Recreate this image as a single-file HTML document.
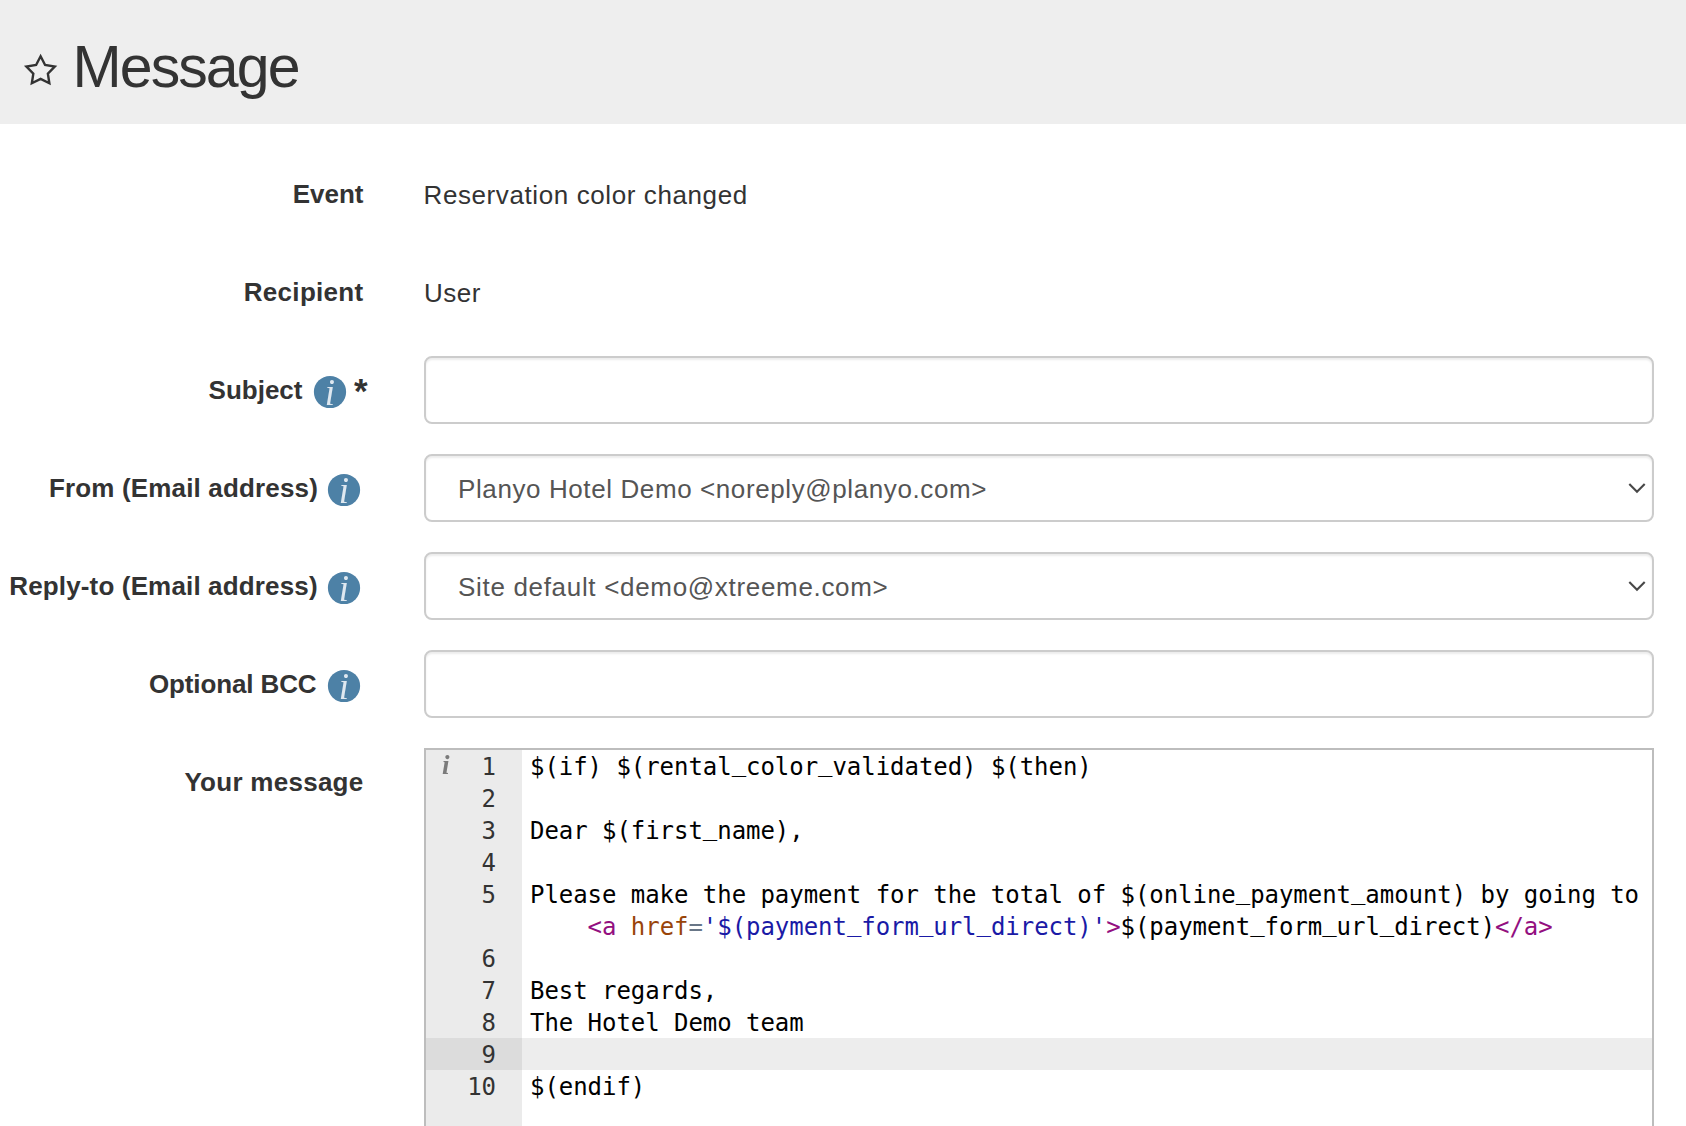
<!DOCTYPE html>
<html lang="en">
<head>
<meta charset="utf-8">
<title>Message</title>
<style>
html,body{margin:0;padding:0;background:#fff;}
body{width:1686px;height:1126px;position:relative;overflow:hidden;font-family:"Liberation Sans",sans-serif;color:#333;}
.hdr{position:absolute;left:0;top:0;width:1686px;height:124px;background:#eee;}
.hdr h1{position:absolute;left:72.5px;top:34px;margin:0;font-weight:400;font-size:59px;line-height:66px;letter-spacing:-1.9px;color:#333;white-space:nowrap;}
.star{position:absolute;left:20px;top:50px;width:42px;height:42px;}
.lbl{position:absolute;right:1322.5px;height:40px;line-height:40px;font-size:26px;font-weight:700;white-space:nowrap;color:#333;}
.val{position:absolute;left:424px;margin-top:.5px;height:40px;line-height:40px;font-size:26px;white-space:nowrap;color:#333;}
.inp{position:absolute;left:424px;width:1230px;height:68px;box-sizing:border-box;border:2px solid #ccc;border-radius:8px;background:#fff;box-shadow:inset 0 2px 2px rgba(0,0,0,.075);}
.inp span{position:absolute;left:32px;top:13px;height:40px;line-height:40px;font-size:26px;color:#555;white-space:nowrap;}
.inp svg{position:absolute;right:4.5px;top:26px;}
.info{position:absolute;width:36px;height:36px;}
.ast{position:absolute;font-size:35px;font-weight:700;line-height:40px;}
.ed{position:absolute;left:424px;top:748px;width:1230px;height:400px;box-sizing:border-box;border:2px solid #bdbdbd;background:#fff;overflow:hidden;font-family:"DejaVu Sans Mono","Liberation Mono",monospace;font-size:24px;letter-spacing:-0.047px;line-height:32px;color:#000;}
.gut{position:absolute;left:0;top:0;width:96px;height:400px;background:#ebebeb;color:#333;}
.gut div{position:absolute;left:0;width:70px;height:32px;line-height:34px;text-align:right;}
.gut .act{background:#dcdcdc;width:96px;box-sizing:border-box;padding-right:26px;}
.ln{position:absolute;left:104px;height:32px;line-height:34px;white-space:pre;}
.actl{position:absolute;left:96px;top:288px;width:1134px;height:32px;background:#ededed;}
.u{position:relative;top:-4.5px}
.t{color:#930f80}.a{color:#994409}.o{color:#687687}.s{color:#1a1aa6}
.gut .gi{position:absolute;left:16px;top:0;width:auto;text-align:left;font-family:"Liberation Serif",serif;font-style:italic;font-weight:700;font-size:27px;line-height:31px;color:#7b7b7b;letter-spacing:0;filter:blur(.5px);}
</style>
</head>
<body>
<svg width="0" height="0" style="position:absolute"><filter id="bl" x="-10%" y="-10%" width="120%" height="120%"><feGaussianBlur stdDeviation="0.45"/></filter></svg>
<div class="hdr">
<svg class="star" viewBox="0 0 42 42"><polygon points="20.60,6.30 25.10,15.01 34.77,16.60 27.88,23.56 29.36,33.25 20.60,28.85 11.84,33.25 13.32,23.56 6.43,16.60 16.10,15.01" fill="none" stroke="#333" stroke-width="2.4" stroke-linejoin="miter" id="st"/></svg>
<h1>Message</h1>
</div>

<div class="lbl" style="top:174px">Event</div>
<div class="val" style="top:174px;left:423.5px;letter-spacing:.6px">Reservation color changed</div>

<div class="lbl" style="top:272px;letter-spacing:.3px">Recipient</div>
<div class="val" style="top:272px;letter-spacing:.5px">User</div>

<div class="lbl" style="top:370px;right:1383.5px">Subject</div>
<svg class="info" style="left:312px;top:374px" width="36" height="36" viewBox="0 0 36 36"><g filter="url(#bl)"><circle cx="18" cy="18" r="16.1" fill="#4e81a6"/><text x="17.9" y="31" text-anchor="middle" font-family="Liberation Serif, serif" font-style="italic" font-size="37" fill="#eef3f8" fill-opacity=".9">i</text></g></svg>
<div class="ast" style="left:354px;top:370.5px">*</div>
<div class="inp" style="top:356px"></div>

<div class="lbl" style="top:468px;right:1368px;letter-spacing:.16px">From (Email address)</div>
<svg class="info" style="left:326px;top:472px" width="36" height="36" viewBox="0 0 36 36"><g filter="url(#bl)"><circle cx="18" cy="18" r="16.1" fill="#4e81a6"/><text x="17.9" y="31" text-anchor="middle" font-family="Liberation Serif, serif" font-style="italic" font-size="37" fill="#eef3f8" fill-opacity=".9">i</text></g></svg>
<div class="inp" style="top:454px"><span style="letter-spacing:.6px">Planyo Hotel Demo &lt;noreply@planyo.com&gt;</span><svg width="22" height="14" viewBox="0 0 22 14"><polyline points="3.3,2 11,9.7 18.7,2" fill="none" stroke="#484848" stroke-width="2.1"/></svg></div>

<div class="lbl" style="top:566px;right:1368.3px;letter-spacing:.15px">Reply-to (Email address)</div>
<svg class="info" style="left:326px;top:570px" width="36" height="36" viewBox="0 0 36 36"><g filter="url(#bl)"><circle cx="18" cy="18" r="16.1" fill="#4e81a6"/><text x="17.9" y="31" text-anchor="middle" font-family="Liberation Serif, serif" font-style="italic" font-size="37" fill="#eef3f8" fill-opacity=".9">i</text></g></svg>
<div class="inp" style="top:552px"><span style="letter-spacing:.68px">Site default &lt;demo@xtreeme.com&gt;</span><svg width="22" height="14" viewBox="0 0 22 14"><polyline points="3.3,2 11,9.7 18.7,2" fill="none" stroke="#484848" stroke-width="2.1"/></svg></div>

<div class="lbl" style="top:664px;right:1369.5px;letter-spacing:-.12px">Optional BCC</div>
<svg class="info" style="left:326px;top:668px" width="36" height="36" viewBox="0 0 36 36"><g filter="url(#bl)"><circle cx="18" cy="18" r="16.1" fill="#4e81a6"/><text x="17.9" y="31" text-anchor="middle" font-family="Liberation Serif, serif" font-style="italic" font-size="37" fill="#eef3f8" fill-opacity=".9">i</text></g></svg>
<div class="inp" style="top:650px"></div>

<div class="lbl" style="top:762px;letter-spacing:.27px">Your message</div>

<div class="ed">
<div class="gut">
<div class="gi">i</div>
<div style="top:0">1</div>
<div style="top:32px">2</div>
<div style="top:64px">3</div>
<div style="top:96px">4</div>
<div style="top:128px">5</div>
<div style="top:192px">6</div>
<div style="top:224px">7</div>
<div style="top:256px">8</div>
<div class="act" style="top:288px">9</div>
<div style="top:320px">10</div>
</div>
<div class="actl"></div>
<div class="ln" style="top:0">$(if) $(rental<span class="u">_</span>color<span class="u">_</span>validated) $(then)</div>
<div class="ln" style="top:64px">Dear $(first<span class="u">_</span>name),</div>
<div class="ln" style="top:128px">Please make the payment for the total of $(online<span class="u">_</span>payment<span class="u">_</span>amount) by going to</div>
<div class="ln" style="top:160px">    <span class="t">&lt;a</span> <span class="a">href</span><span class="o">=</span><span class="s">'$(payment<span class="u">_</span>form<span class="u">_</span>url<span class="u">_</span>direct)'</span><span class="t">&gt;</span>$(payment<span class="u">_</span>form<span class="u">_</span>url<span class="u">_</span>direct)<span class="t">&lt;/a&gt;</span></div>
<div class="ln" style="top:224px">Best regards,</div>
<div class="ln" style="top:256px">The Hotel Demo team</div>
<div class="ln" style="top:320px">$(endif)</div>
</div>

</body>
</html>
